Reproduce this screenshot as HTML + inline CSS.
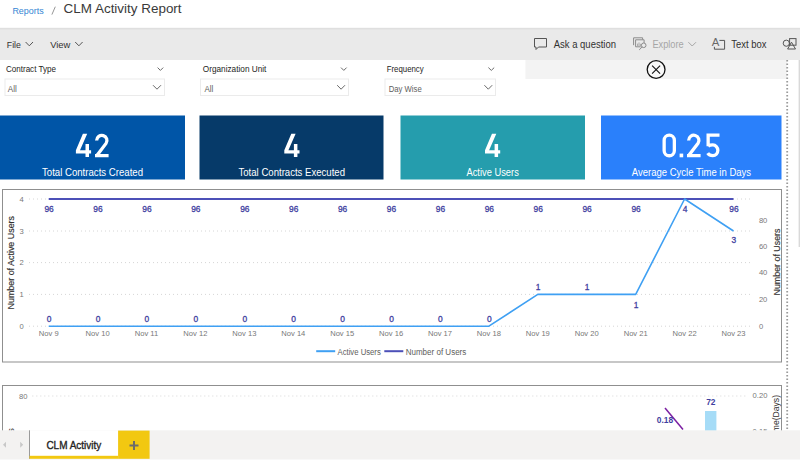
<!DOCTYPE html>
<html><head><meta charset="utf-8"><style>
html,body{margin:0;padding:0;width:800px;height:460px;overflow:hidden;background:#fff}
svg{display:block}
text{font-family:"Liberation Sans",sans-serif}
</style></head><body>
<svg width="800" height="460" viewBox="0 0 800 460">
<!-- header -->
<rect x="0" y="0" width="800" height="28" fill="#ffffff"/>
<text x="12.4" y="13.7" font-size="9" fill="#3586d4" textLength="31.3" lengthAdjust="spacingAndGlyphs">Reports</text>
<path d="M51.9 14.6 L55.3 6.7" stroke="#8a8a8a" stroke-width="0.9"/>
<text x="63.6" y="13.3" font-size="12.8" fill="#3a3a3a" textLength="118" lengthAdjust="spacingAndGlyphs">CLM Activity Report</text>

<!-- toolbar -->
<rect x="0" y="28" width="800" height="32" fill="#eaeaea"/>
<rect x="0" y="27.8" width="800" height="1.6" fill="#dfdfdf"/>
<text x="6.8" y="48" font-size="9.8" fill="#323130" textLength="14.1" lengthAdjust="spacingAndGlyphs">File</text>
<path d="M25.6 42 L29.3 45.8 L33 42" fill="none" stroke="#555" stroke-width="1"/>
<text x="50.2" y="48" font-size="9.8" fill="#323130" textLength="20.2" lengthAdjust="spacingAndGlyphs">View</text>
<path d="M75.2 42 L78.9 45.8 L82.6 42" fill="none" stroke="#555" stroke-width="1"/>

<!-- ask icon -->
<path d="M534.5 38.5 H546.5 V47 H538.5 L536 49.5 V47 H534.5 Z" fill="none" stroke="#555" stroke-width="1"/>
<text x="553.7" y="48.2" font-size="10.3" fill="#323130" textLength="62.3" lengthAdjust="spacingAndGlyphs">Ask a question</text>
<!-- explore icon -->
<g fill="none" stroke="#8c8c8c" stroke-width="1">
<path d="M633.6 45.2 V37.8 H642.6 V39.6"/>
<path d="M644.1 43 V39.8 H635.6 V46.8 H640.8"/>
<path d="M637.6 46 V43.6 M639 46 V42.4 M640.4 46 V43.8" stroke="#a8a8a8"/>
<circle cx="643.7" cy="45.3" r="2.3"/>
<path d="M642.1 47 L639.2 49.9"/>
</g>
<text x="652.4" y="48.2" font-size="10.3" fill="#a6a6a6" textLength="31.3" lengthAdjust="spacingAndGlyphs">Explore</text>
<path d="M688.4 42.2 L692.2 46 L696 42.2" fill="none" stroke="#a6a6a6" stroke-width="1"/>
<!-- text box icon -->
<text x="711.8" y="45.6" font-size="10.4" fill="#6a6a6a" textLength="7.6" lengthAdjust="spacingAndGlyphs">A</text>
<path d="M719.4 40.4 H724.6 V49.2 H714.4 V46.8" fill="none" stroke="#555" stroke-width="1"/>
<text x="731.3" y="48.2" font-size="10.3" fill="#323130" textLength="35.2" lengthAdjust="spacingAndGlyphs">Text box</text>
<!-- shapes icon -->
<g fill="none" stroke="#555" stroke-width="1">
<circle cx="786.3" cy="43.2" r="3.1"/>
<rect x="789.6" y="38.6" width="6.4" height="6.6"/>
<path d="M787.6 49 L791.5 42.2 L795.5 49 Z"/>
</g>

<!-- filters -->
<rect x="0" y="60" width="800" height="50" fill="#ffffff"/>
<rect x="525.4" y="60" width="261.6" height="19" fill="#f3f3f3"/>
<g font-size="8.6" fill="#252423">
<text x="5.9" y="72" textLength="50.1" lengthAdjust="spacingAndGlyphs">Contract Type</text>
<text x="202.8" y="72" textLength="63.6" lengthAdjust="spacingAndGlyphs">Organization Unit</text>
<text x="386.7" y="72" textLength="37" lengthAdjust="spacingAndGlyphs">Frequency</text>
</g>
<g fill="#fff" stroke="#ebebeb" stroke-width="1">
<rect x="5" y="79" width="159.5" height="16.5"/>
<rect x="200.5" y="79" width="148" height="16.5"/>
<rect x="385" y="79" width="110.5" height="16.5"/>
</g>
<g font-size="8.6" fill="#605e5c">
<text x="7.8" y="91.5" textLength="9" lengthAdjust="spacingAndGlyphs">All</text>
<text x="204.4" y="91.5" textLength="8.9" lengthAdjust="spacingAndGlyphs">All</text>
<text x="388.7" y="91.5" textLength="33" lengthAdjust="spacingAndGlyphs">Day Wise</text>
</g>
<g fill="none" stroke="#6a6a6a" stroke-width="1">
<path d="M157.6 67.6 L160.4 70.4 L163.2 67.6"/>
<path d="M341 67.6 L343.8 70.4 L346.6 67.6"/>
<path d="M488.4 67.6 L491.3 70.4 L494.2 67.6"/>
<path d="M153 85.2 L157 89.2 L161 85.2"/>
<path d="M337.2 85.2 L341.1 89.2 L345 85.2"/>
<path d="M484.4 85.2 L488.3 89.2 L492.2 85.2"/>
</g>
<!-- close circle -->
<circle cx="656.1" cy="69.5" r="8.9" fill="#f9f9f9" stroke="#111" stroke-width="1.3"/>
<path d="M652.1 65.7 L660.1 73.7 M660.1 65.7 L652.1 73.7" stroke="#111" stroke-width="1.1"/>
<!-- dotted right line -->
<line x1="787.2" y1="60" x2="787.2" y2="430" stroke="#9a9a9a" stroke-width="1.8" stroke-dasharray="1.5 2"/>
<rect x="798.6" y="60" width="1.4" height="187" fill="#d9d9d9"/>

<!-- KPI cards -->
<rect x="0" y="115.5" width="185" height="64" fill="#0055a7"/>
<rect x="199.5" y="115.5" width="184" height="64" fill="#063a69"/>
<rect x="400.5" y="115.5" width="184.5" height="64" fill="#259dad"/>
<rect x="601" y="115.5" width="180.5" height="64" fill="#2a80fb"/>
<defs>
<polygon id="d4" points="7,0 11.3,0 4.1,16.4 9.6,16.4 9.6,10.1 13.1,10.1 13.1,16.4 15.2,16.4 15.2,19.7 13.1,19.7 13.1,23.1 9.6,23.1 9.6,19.7 0,19.7 0,16.4" fill="#fff"/>
<path id="d2" d="M1.65 6.9 A5.15 5.15 0 1 1 11.05 9.8 L1.7 22.1 M0 22.05 H13.6" fill="none" stroke="#fff" stroke-width="3.3"/>
<path id="d5" d="M1.65 1.65 H13 M1.65 0 V12.8 M1.65 12.6 C2.8 11.8 4.4 11.45 6.3 11.45 A5.05 5.35 0 0 1 6.3 22.15 C4 22.15 2.3 21.3 1.2 19.6" fill="none" stroke="#fff" stroke-width="3.3"/>
</defs>
<use href="#d4" x="75.9" y="133.8"/>
<use href="#d2" x="95" y="133.6"/>
<use href="#d4" x="284.3" y="133.8"/>
<use href="#d4" x="485" y="133.8"/>
<rect x="664.15" y="135.05" width="10.2" height="20.7" rx="5.1" fill="none" stroke="#fff" stroke-width="3.3"/>
<rect x="679.6" y="153.6" width="3.6" height="3.7" fill="#fff"/>
<use href="#d2" x="687" y="133.5"/>
<use href="#d5" x="706.5" y="133.5"/>
<g fill="#fff" font-size="10.3">
<text x="42" y="175.5" textLength="101" lengthAdjust="spacingAndGlyphs">Total Contracts Created</text>
<text x="238.5" y="175.5" textLength="106.5" lengthAdjust="spacingAndGlyphs">Total Contracts Executed</text>
<text x="466.5" y="175.5" textLength="52.3" lengthAdjust="spacingAndGlyphs">Active Users</text>
<text x="631.8" y="175.5" textLength="119.3" lengthAdjust="spacingAndGlyphs">Average Cycle Time in Days</text>
</g>

<!-- chart 1 -->
<rect x="2.5" y="189.5" width="779" height="172.5" fill="#fff" stroke="#8f8f8f" stroke-width="1"/>
<g stroke="#d6d6d6" stroke-width="1" stroke-dasharray="1 3">
<line x1="29" y1="199" x2="752" y2="199"/>
<line x1="29" y1="231" x2="752" y2="231"/>
<line x1="29" y1="262.6" x2="752" y2="262.6"/>
<line x1="29" y1="294.4" x2="752" y2="294.4"/>
<line x1="29" y1="326.2" x2="752" y2="326.2"/>
</g>
<g font-size="7.6" fill="#777">
<text x="19.5" y="201.7">4</text>
<text x="19.5" y="233.7">3</text>
<text x="19.5" y="265.3">2</text>
<text x="19.5" y="297.1">1</text>
<text x="19.5" y="328.9">0</text>
<text x="758.9" y="222.7">80</text>
<text x="758.9" y="249">60</text>
<text x="758.9" y="275.4">40</text>
<text x="758.9" y="301.8">20</text>
<text x="758.9" y="328.9">0</text>
</g>
<text transform="translate(14.3 262.75) rotate(-90)" text-anchor="middle" font-size="8.6" fill="#323130" stroke="#323130" stroke-width="0.15" textLength="93.5" lengthAdjust="spacingAndGlyphs">Number of Active Users</text>
<text transform="translate(779.9 262) rotate(-90)" text-anchor="middle" font-size="8.6" fill="#323130" stroke="#323130" stroke-width="0.15" textLength="67" lengthAdjust="spacingAndGlyphs">Number of Users</text>
<g font-size="7.6" fill="#777" text-anchor="middle">
<text x="48.7" y="336.4">Nov 9</text>
<text x="97.6" y="336.4">Nov 10</text>
<text x="146.5" y="336.4">Nov 11</text>
<text x="195.4" y="336.4">Nov 12</text>
<text x="244.4" y="336.4">Nov 13</text>
<text x="293.3" y="336.4">Nov 14</text>
<text x="342.2" y="336.4">Nov 15</text>
<text x="391.1" y="336.4">Nov 16</text>
<text x="440" y="336.4">Nov 17</text>
<text x="488.9" y="336.4">Nov 18</text>
<text x="537.8" y="336.4">Nov 19</text>
<text x="586.7" y="336.4">Nov 20</text>
<text x="635.7" y="336.4">Nov 21</text>
<text x="684.6" y="336.4">Nov 22</text>
<text x="733.5" y="336.4">Nov 23</text>
</g>
<line x1="48.7" y1="199" x2="733.5" y2="199" stroke="#4c50b8" stroke-width="2"/>
<polyline points="48.7,326.2 488.9,326.2 537.8,294.4 635.7,294.4 684.6,199 733.5,231" fill="none" stroke="#3fa0f3" stroke-width="1.6" stroke-linejoin="round"/>
<g font-size="8.4" fill="#4040a0" stroke="#4040a0" stroke-width="0.3" text-anchor="middle" transform="translate(0.4 0)">
<text x="48.7" y="212">96</text>
<text x="97.6" y="212">96</text>
<text x="146.5" y="212">96</text>
<text x="195.4" y="212">96</text>
<text x="244.4" y="212">96</text>
<text x="293.3" y="212">96</text>
<text x="342.2" y="212">96</text>
<text x="391.1" y="212">96</text>
<text x="440" y="212">96</text>
<text x="488.9" y="212">96</text>
<text x="537.8" y="212">96</text>
<text x="586.7" y="212">96</text>
<text x="635.7" y="212">96</text>
<text x="733.5" y="212">96</text>
<text x="48.7" y="322">0</text>
<text x="97.6" y="322">0</text>
<text x="146.5" y="322">0</text>
<text x="195.4" y="322">0</text>
<text x="244.4" y="322">0</text>
<text x="293.3" y="322">0</text>
<text x="342.2" y="322">0</text>
<text x="391.1" y="322">0</text>
<text x="440" y="322">0</text>
<text x="488.9" y="322">0</text>
<text x="537.8" y="289.5">1</text>
<text x="586.7" y="289.5">1</text>
<text x="635.7" y="307.5">1</text>
<text x="684.6" y="211.6">4</text>
<text x="733.5" y="243.3">3</text>
</g>
<!-- legend -->
<line x1="316.2" y1="351.2" x2="335.2" y2="351.2" stroke="#3fa0f3" stroke-width="2"/>
<text x="337.5" y="354.5" font-size="8.4" fill="#605e5c" textLength="43.3" lengthAdjust="spacingAndGlyphs">Active Users</text>
<line x1="384.3" y1="351.2" x2="403.3" y2="351.2" stroke="#4c50b8" stroke-width="2"/>
<text x="405.7" y="354.5" font-size="8.4" fill="#605e5c" textLength="60.6" lengthAdjust="spacingAndGlyphs">Number of Users</text>

<!-- chart 2 -->
<rect x="2.5" y="385.5" width="779" height="60" fill="#fff" stroke="#8f8f8f" stroke-width="1"/>
<line x1="32.3" y1="396" x2="746" y2="396" stroke="#d6d6d6" stroke-width="1" stroke-dasharray="1 3"/>
<text x="19" y="398.7" font-size="7.6" fill="#777">80</text>
<text x="752.6" y="397.7" font-size="7.6" fill="#777">0.20</text>
<text x="752.6" y="434" font-size="7.6" fill="#777">0.15</text>
<text x="710.8" y="405" font-size="8.4" font-weight="bold" fill="#3f3f9f" text-anchor="middle">72</text>
<rect x="705" y="411" width="11.4" height="20" fill="#a6dcf7"/>
<line x1="665" y1="408" x2="683" y2="429.6" stroke="#7b1fa2" stroke-width="1.5"/>
<text x="665" y="423" font-size="8.4" font-weight="bold" fill="#3f3f9f" text-anchor="middle">0.18</text>
<text transform="translate(779 395) rotate(-90)" text-anchor="end" font-size="8.6" fill="#323130">Cycle Time(Days)</text>
<text transform="translate(14.3 428.2) rotate(-90)" text-anchor="end" font-size="8.6" fill="#323130">Count of Contracts</text>

<!-- tab bar -->
<rect x="0" y="430.3" width="800" height="29.7" fill="#f3f2f1"/>
<rect x="0" y="459" width="800" height="1" fill="#f8f8f8"/>
<path d="M6 441.8 L3 444.8 L6 447.8 Z" fill="#c8c8c8"/>
<path d="M20.2 441.8 L23.2 444.8 L20.2 447.8 Z" fill="#c8c8c8"/>
<rect x="29.5" y="430.3" width="88.6" height="28.5" fill="#fff"/>
<line x1="29.5" y1="430.3" x2="29.5" y2="458.8" stroke="#9a9a9a" stroke-width="1"/>
<rect x="29.5" y="455.8" width="88.6" height="3" fill="#f2c811"/>
<text x="46.4" y="449.3" font-size="10.8" fill="#252423" stroke="#252423" stroke-width="0.35" textLength="54.85" lengthAdjust="spacingAndGlyphs">CLM Activity</text>
<rect x="118.1" y="430.6" width="31.5" height="28.2" fill="#f2c811"/>
<path d="M129.5 445.4 H138.5 M134 440.9 V449.9" stroke="#6b6b6b" stroke-width="2"/>
</svg>
</body></html>
